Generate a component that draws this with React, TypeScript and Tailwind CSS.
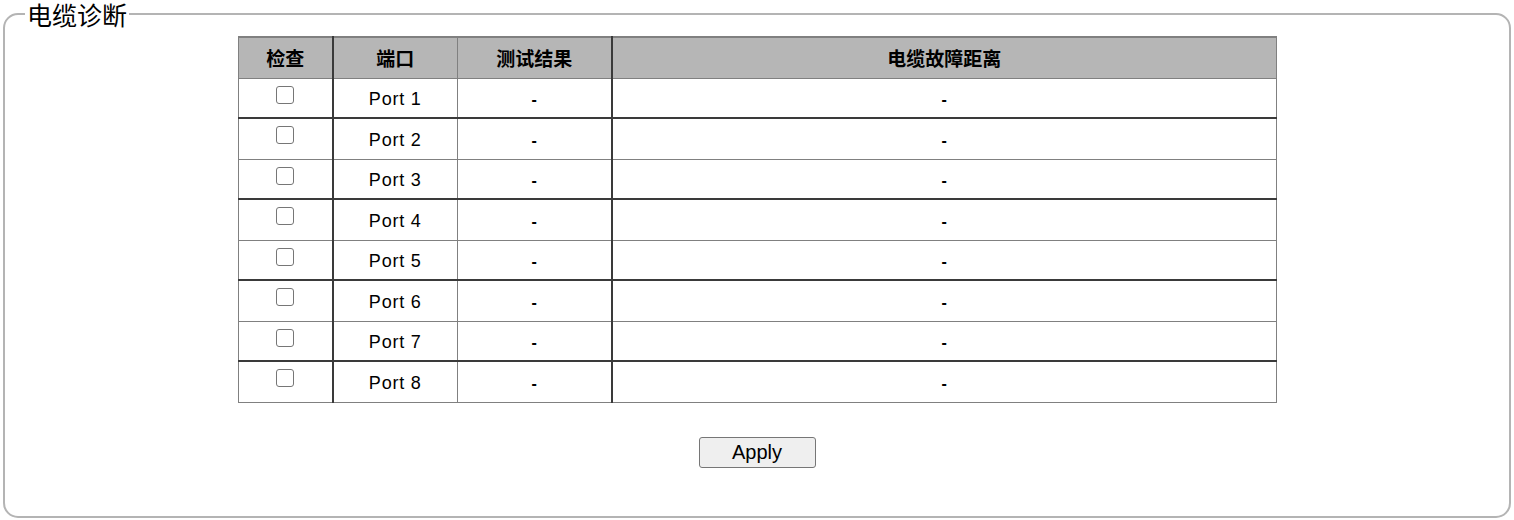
import { useState } from 'react';

const ports = ['Port 1', 'Port 2', 'Port 3', 'Port 4', 'Port 5', 'Port 6', 'Port 7', 'Port 8'];

export default function App() {
  const [checked, setChecked] = useState<boolean[]>(ports.map(() => false));

  const toggle = (i: number) => {
    setChecked(checked.map((c, j) => (j === i ? !c : c)));
  };

  return (
    <div className="w-[1514px] h-[520px] bg-white pt-[1px] font-['Liberation_Sans','Noto_Sans_CJK_SC',sans-serif] text-black">
      <fieldset className="mx-[3px] h-[518px] border-[2px] border-[#b4b4b4] rounded-[15px] -mt-[1px]">
        <legend className="ml-[20px] px-[2px] text-[25px] leading-[28px] font-['Noto_Sans_CJK_SC',sans-serif]">
          电缆诊断
        </legend>

        <table className="mx-auto mt-[8px] w-[1039px] border-collapse border-t-[2px] border-x border-b border-[#808080]">
          <thead>
            <tr className="bg-[#b6b6b6] h-[41px] text-[19px] font-bold font-['Noto_Sans_CJK_SC',sans-serif]">
              <th className="w-[95px] border-r-[2px] border-[#3a3a3a]">检查</th>
              <th className="w-[124px] border-r border-[#808080]">端口</th>
              <th className="w-[155px] border-r-[2px] border-[#3a3a3a]">测试结果</th>
              <th>电缆故障距离</th>
            </tr>
          </thead>
          <tbody>
            {ports.map((port, i) => (
              <tr
                key={port}
                className={
                  i % 2 === 0
                    ? 'h-[40px] border-t border-[#808080]'
                    : 'h-[41px] border-t-[2px] border-[#3a3a3a]'
                }
              >
                <td className="align-top pt-[7px] text-center border-r-[2px] border-r-[#3a3a3a]">
                  <input
                    type="checkbox"
                    checked={checked[i]}
                    onChange={() => toggle(i)}
                    className="appearance-none w-[18px] h-[18px] border border-[#767676] rounded-[3px] bg-white checked:bg-[#0075ff] align-top"
                  />
                </td>
                <td className="text-center text-[18px] tracking-[0.8px] pt-[4px] border-r border-r-[#808080]">{port}</td>
                <td className="text-center text-[16px] font-bold pt-[4px] border-r-[2px] border-r-[#3a3a3a]">-</td>
                <td className="text-center text-[16px] font-bold pt-[4px]">-</td>
              </tr>
            ))}
          </tbody>
        </table>

        <div className="flex justify-center mt-[34px]">
          <button className="w-[117px] h-[31px] bg-[#efefef] border border-[#767676] rounded-[3px] text-[20px] leading-none pb-[1px]">
            Apply
          </button>
        </div>
      </fieldset>
    </div>
  );
}
